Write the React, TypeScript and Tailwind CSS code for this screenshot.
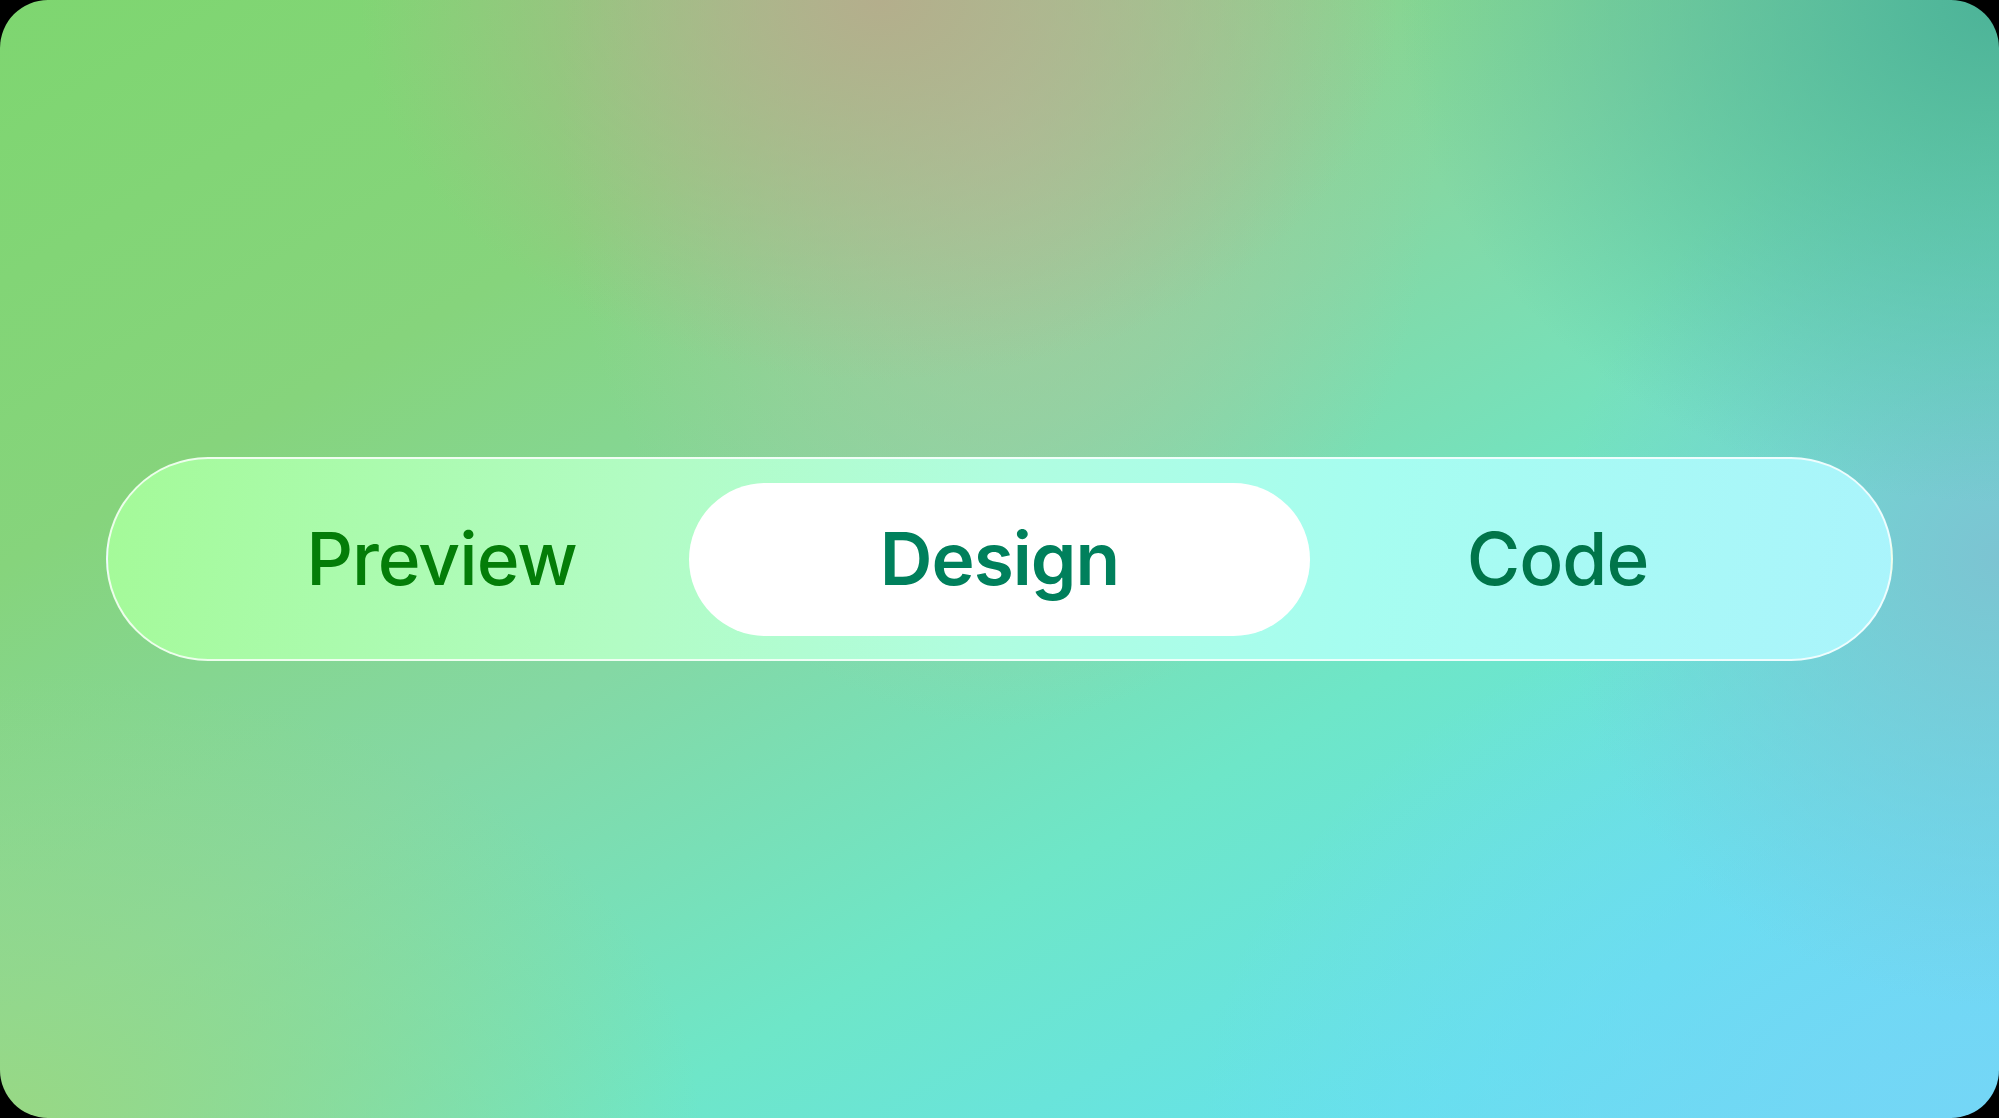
const tabs = ['Preview', 'Design', 'Code']

export default function App() {
  const active = 'Design'

  return (
    <div className="w-[1999px] h-[1118px] bg-black overflow-hidden">
      <div className="relative w-full h-full rounded-[48px] overflow-hidden flex items-center bg-[radial-gradient(ellipse_26%_34%_at_44%_0%,#b4ae8c_0%,rgba(180,174,140,0)_100%),radial-gradient(ellipse_22%_55%_at_50%_10%,rgba(170,200,160,0.9)_0%,rgba(170,200,160,0)_100%),radial-gradient(ellipse_30%_45%_at_100%_0%,#4cb398_0%,rgba(76,179,152,0)_100%),radial-gradient(ellipse_22%_40%_at_100%_50%,#7cc4d2_0%,rgba(124,196,210,0)_100%),radial-gradient(ellipse_35%_40%_at_0%_100%,#98d884_0%,rgba(152,216,132,0)_100%),radial-gradient(ellipse_40%_50%_at_100%_100%,#74d6f6_0%,rgba(116,214,246,0)_100%),linear-gradient(150deg,#7ed670_0%,#86d47c_25%,#84d8a4_45%,#6ee6c8_65%,#64e2ec_85%,#6cd8f4_100%)]">
        <div className="mx-[106px] flex-1 h-[204px] rounded-full border-2 border-white/80 px-[86px] grid grid-cols-[1fr_621px_1fr] items-center bg-[linear-gradient(100deg,#a4fa98_0%,#b2fcc4_30%,#b0fde0_50%,#a6fdf0_70%,#aaf4fc_100%)] font-['Inter','Liberation_Sans',sans-serif]">
          {tabs.map((t) => {
            const isActive = t === active
            return (
              <div
                key={t}
                className={
                  isActive
                    ? 'h-[153px] rounded-full bg-white flex items-center justify-center text-[73px] font-semibold text-[#00805c] tracking-[-1px]'
                    : t === 'Preview'
                      ? 'h-[153px] flex items-center justify-center text-[73px] font-medium text-[#047d08] tracking-[-1px]'
                      : 'h-[153px] flex items-center justify-center text-[73px] font-medium text-[#00754a] tracking-[-1px]'
                }
              >
                {t}
              </div>
            )
          })}
        </div>
      </div>
    </div>
  )
}
